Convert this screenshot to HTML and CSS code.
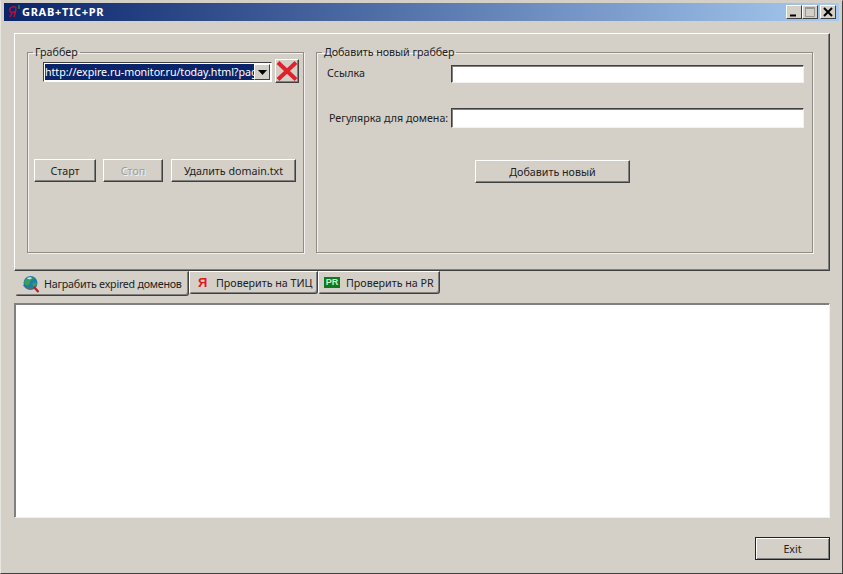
FILE: index.html
```html
<!DOCTYPE html>
<html lang="ru">
<head>
<meta charset="utf-8">
<title>GRAB+TIC+PR</title>
<link rel="stylesheet" href="styles.css">
</head>
<body>
<div class="window">
  <header class="titlebar">
    <svg class="appicon" width="16" height="16" viewBox="0 0 16 16"><path d="M10 3C6 2 3 4 4 7c.6 2 4 2 5 0M10 3c0 4-1 7-2 10M6 9l-2 4" fill="none" stroke="#b0123c" stroke-width="1.500"/><path d="M13 1v4" stroke="#2e9a3c" stroke-width="1.300"/></svg>
    <span class="title">GRAB+TIC+PR</span>
    <div class="caption">
      <button class="capbtn"><svg width="16" height="14" viewBox="0 0 16 14"><path d="M4 10.500h6" stroke="#000" stroke-width="2"/></svg></button>
      <button class="capbtn capmax"><svg width="16" height="14" viewBox="0 0 16 14"><path d="M3.500 2.500h9v9h-9z" fill="none" stroke="#9a978f"/><path d="M3 3h10" stroke="#9a978f" stroke-width="2"/></svg></button>
      <button class="capbtn capclose"><svg width="16" height="14" viewBox="0 0 16 14"><path d="M4 3l8 8M12 3l-8 8" stroke="#000" stroke-width="2"/></svg></button>
    </div>
  </header>

  <main class="client">
    <section class="tabpage">
      <fieldset class="group group-grab">
        <legend>Граббер</legend>
        <div class="comborow">
          <div class="combo">
            <span class="combotext">http://expire.ru-monitor.ru/today.html?pag</span>
            <span class="comboarrow"><svg width="9" height="5" viewBox="0 0 9 5"><path d="M0 0h9L4.500 5z" fill="#000"/></svg></span>
          </div>
          <button class="btn iconbtn"><svg width="22" height="20" viewBox="0 0 22 20"><path d="M2 1.500l18 17M20 1.500l-18 17" stroke="#e0202a" stroke-width="4"/></svg></button>
        </div>
        <div class="actions">
          <button class="btn btn-start">Старт</button>
          <button class="btn btn-stop" disabled>Стоп</button>
          <button class="btn btn-del">Удалить domain.txt</button>
        </div>
      </fieldset>
      <fieldset class="group group-add">
        <legend>Добавить новый граббер</legend>
        <div class="field field-link">
          <label class="lbl lbl-link">Ссылка</label>
          <span class="input"></span>
        </div>
        <div class="field field-regex">
          <label class="lbl lbl-regex">Регулярка для домена:</label>
          <span class="input input-tall"></span>
        </div>
        <div class="addrow"><button class="btn btn-add">Добавить новый</button></div>
      </fieldset>
    </section>

    <nav class="tabs">
      <div class="tab tab-active">
        <svg class="globe" width="18" height="18" viewBox="0 0 18 18"><circle cx="8.500" cy="8" r="7" fill="#1c7fa8"/><path d="M3 5c2-3 6-3 8-2 0 2-3 2-3 4s-2 4-4 3-2-3-1-5zM11 8c2-1 4 0 4 1s-2 3-3 3-2-3-1-4z" fill="#3f9e52"/><path d="M5 3c2-1 4-1 5 0-1 1-3 2-5 0z" fill="#d8e8ec"/><path d="M1.500 10c3 5 9 5 13 0" fill="none" stroke="#5a6a78" stroke-width="1.200"/><path d="M12 12l4.500 5" stroke="#b52020" stroke-width="2.200"/></svg>
        <span class="tab-label">Награбить expired доменов</span>
      </div>
      <div class="tab tab-tic">
        <span class="ya">Я</span>
        <span>Проверить на ТИЦ</span>
      </div>
      <div class="tab tab-pr">
        <span class="pr">PR</span>
        <span>Проверить на PR</span>
      </div>
    </nav>

    <div class="memo"></div>

    <footer class="footer"><button class="btn btn-exit">Exit</button></footer>
  </main>
</div>
</body>
</html>
```
FILE: styles.css
```css
* { box-sizing: border-box; }
html, body { margin: 0; height: 100%; overflow: hidden; }
body { width: 843px; height: 574px; background: #d4d0c8; font: 10.700px "Noto Sans", "Liberation Sans", sans-serif; color: #222; }
.window {
  width: 843px; height: 574px; display: flex; flex-direction: column;
  background: #d4d0c8; padding: 3px 3px 2px 3px;
  border-top: 1px solid #d4d0c8; border-left: 1px solid #e8e6e0;
  border-right: 1px solid #404040; border-bottom: 1px solid #404040;
}
.titlebar {
  height: 18px; flex: none; display: flex; align-items: center;
  background: linear-gradient(90deg, #0a246a, #a6caf0);
  color: #fff; padding-left: 2px; margin-top: -1px;
}
.appicon { flex: none; }
.title { font: bold 11px/16px "Noto Sans", sans-serif; margin: -1px 0 0 0; letter-spacing: 0.700px; }
.caption { margin-left: auto; display: flex; padding-right: 3px; }
.capbtn {
  width: 16px; height: 14px; padding: 0; background: #d4d0c8; display: block;
  border: 1px solid; border-color: #fff #404040 #404040 #fff;
}
.capbtn svg { display: block; margin: -1px; }
.capclose { margin-left: 2px; }
.client { flex: 1; display: flex; flex-direction: column; padding: 12px 9px 0 10px; min-height: 0; }
.tabpage {
  height: 238px; flex: none; display: flex; gap: 12px; padding: 11px 0 0 12px;
  border: 1px solid; border-color: #fff #404040 #404040 #fff;
  box-shadow: inset -1px -1px 0 #808080;
}
.group {
  margin: 0; padding: 0; min-width: 0; height: 208px; position: relative;
  border: 1px solid #8f8c85; box-shadow: 1px 1px 0 #f4f2ee, inset 1px 1px 0 #f4f2ee;
}
.group legend { padding: 0 2px; margin-left: 5px; line-height: 14px; color: #222; font-size: 10.700px; }
.group-add legend { letter-spacing: -0.050px; }
.group-grab { width: 277px; }
.group-add { width: 497px; }

.comborow { display: flex; align-items: flex-start; padding-left: 15px; height: 24px; }
.combo {
  width: 229px; height: 20px; margin-top: 3px; display: flex; background: #fff;
  border: 1px solid; border-color: #404040 #fff #fff #404040; padding: 1px;
}
.combotext {
  flex: 1; min-width: 0; overflow: hidden; white-space: nowrap;
  background: #0a246a; color: #fff; line-height: 16px; font-size: 10.700px; letter-spacing: -0.050px;
}
.comboarrow {
  width: 16px; flex: none; background: #d4d0c8; display: flex; align-items: center; justify-content: center;
  border: 1px solid; border-color: #fff #404040 #404040 #fff;
}
.btn {
  display: block; padding: 0; background: #d4d0c8; color: #222; text-align: center;
  font: 10.700px "Noto Sans", "Liberation Sans", sans-serif;
  border: 1px solid; border-color: #fff #404040 #404040 #fff;
  box-shadow: inset -1px -1px 0 #808080;
}
.iconbtn { width: 24px; height: 24px; margin-left: 3px; display: flex; align-items: center; justify-content: center; }
.actions { display: flex; margin-top: 76px; padding-left: 6px; align-items: flex-start; }
.btn-start { width: 62px; height: 23px; }
.btn-stop { width: 60px; height: 23px; margin-left: 7px; color: #a09d96; text-shadow: 1px 1px 0 #f4f2ee; }
.btn-del { width: 125px; height: 23px; margin-left: 8px; }

.field { display: flex; padding-left: 134px; position: relative; }
.field-link { margin-top: 6px; height: 18px; }
.field-regex { margin-top: 25px; height: 20px; }
.lbl { position: absolute; line-height: 14px; white-space: nowrap; }
.lbl-link { left: 10px; top: 1px; }
.lbl-regex { left: 12px; top: 3px; }
.input {
  display: block; width: 353px; height: 18px; background: #fff;
  border: 1px solid; border-color: #404040 #f4f2ee #f4f2ee #404040; box-shadow: inset 1px 1px 0 #808080;
}
.input-tall { height: 20px; }
.addrow { margin-top: 32px; padding-left: 158px; }
.btn-add { width: 155px; height: 23px; }

.tabs { display: flex; align-items: flex-start; height: 32px; flex: none; }
.tab {
  display: flex; align-items: center; white-space: nowrap;
  border: 1px solid; border-color: #fff #404040 #404040 #d4d0c8;
  box-shadow: inset -1px -1px 0 #808080; border-radius: 0 0 3px 3px;
}
.tab-active { width: 174px; height: 25px; margin-left: 1px; padding-left: 6px; gap: 4px; border-top-color: #d4d0c8; }
.tab-label { letter-spacing: -0.250px; }
.tab-tic { width: 129px; height: 23px; padding-left: 8px; border-left-color: #fff; }
.tab-pr { width: 122px; height: 23px; padding-left: 5px; border-left-color: #fff; }
.globe { flex: none; }
.tab-tic .ya { color: #e01818; font: bold 13px "Liberation Sans", sans-serif; width: 18px; }
.tab-pr .pr {
  width: 16px; height: 11px; margin-right: 6px; background: #0f7a18; color: #d6f0cc;
  font: bold 9px/11px "Liberation Sans", sans-serif; text-align: center;
}
.memo {
  height: 215px; flex: none; background: #fff;
  border: 1px solid; border-color: #808080 #f4f2ee #f4f2ee #808080; box-shadow: inset 1px 1px 0 #808080;
}
.footer { display: flex; justify-content: flex-end; padding-top: 19px; }
.btn-exit { width: 75px; height: 23px; border: 1px solid #222; box-shadow: inset 1px 1px 0 #fff, inset -1px -1px 0 #808080; }
```
